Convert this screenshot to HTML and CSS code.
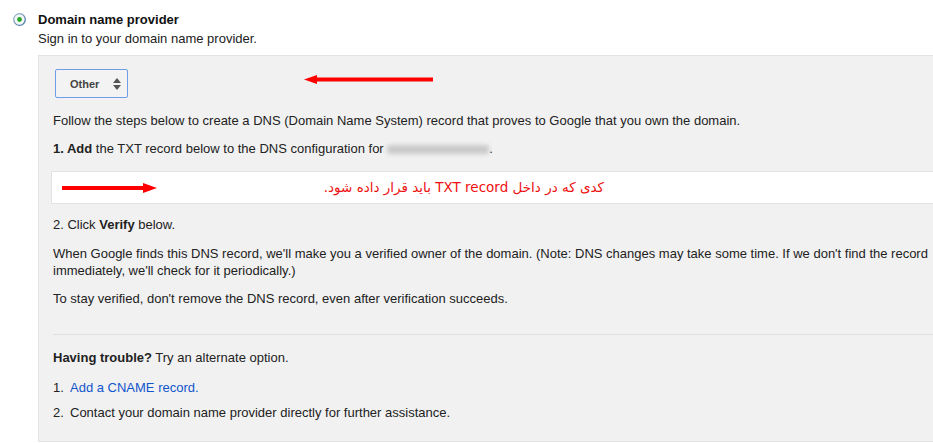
FILE: index.html
```html
<!DOCTYPE html>
<html>
<head>
<meta charset="utf-8">
<title>Domain name provider</title>
<link rel="stylesheet" href="styles.css">
</head>
<body>
<div class="option">
  <svg class="radio" width="13" height="13" viewBox="0 0 13 13">
    <defs>
      <linearGradient id="rg" x1="0" y1="0" x2="1" y2="1">
        <stop offset="0" stop-color="#a9c0d8"/>
        <stop offset="1" stop-color="#3b6fa3"/>
      </linearGradient>
    </defs>
    <circle cx="6.5" cy="6.5" r="5.8" fill="#f4f6f8" stroke="url(#rg)" stroke-width="1.3"/>
    <circle cx="6.5" cy="6.5" r="2.4" fill="#27a827"/>
  </svg>
  <div class="option-body">
    <div class="title">Domain name provider</div>
    <div class="sub">Sign in to your domain name provider.</div>
    <div class="panel">
      <div class="select-row">
        <div class="select">
          <span class="select-label">Other</span>
          <svg class="spinner" width="8" height="12" viewBox="0 0 8 12">
            <polygon points="4,0 8,5 0,5" fill="#555"/>
            <polygon points="0,7 8,7 4,12" fill="#555"/>
          </svg>
        </div>
        <svg class="arrow-left" width="129" height="9" viewBox="0 0 129 9">
          <rect x="12" y="2.5" width="117" height="4" fill="#ff0000"/>
          <polygon points="0,4.5 13,0 13,9" fill="#ff0000"/>
        </svg>
      </div>
      <p class="para first">Follow the steps below to create a DNS (Domain Name System) record that proves to Google that you own the domain.</p>
      <p class="para"><b>1. Add</b> the TXT record below to the DNS configuration for <span class="blur"></span>.</p>
      <div class="record">
        <svg class="arrow-right" width="95" height="10" viewBox="0 0 95 10">
          <rect x="0" y="3" width="83" height="4" fill="#ff0000"/>
          <polygon points="81,0 95,5 81,10" fill="#ff0000"/>
        </svg>
        <span class="fa" dir="rtl">کدی که در داخل TXT record باید قرار داده شود.</span>
      </div>
      <p class="para after-record">2. Click <b>Verify</b> below.</p>
      <p class="para wide">When Google finds this DNS record, we'll make you a verified owner of the domain. (Note: DNS changes may take some time. If we don't find the record immediately, we'll check for it periodically.)</p>
      <p class="para">To stay verified, don't remove the DNS record, even after verification succeeds.</p>
      <div class="divider"></div>
      <p class="para trouble"><b>Having trouble?</b> Try an alternate option.</p>
      <ol class="alt-list">
        <li class="alt-item"><span class="num">1.</span><a class="link" href="#">Add a CNAME record.</a></li>
        <li class="alt-item second"><span class="num">2.</span><span>Contact your domain name provider directly for further assistance.</span></li>
      </ol>
    </div>
  </div>
</div>
</body>
</html>
```
FILE: styles.css
```css
html, body {
  overflow: hidden;
}
body {
  margin: 0;
  background: #ffffff;
  font-family: "Liberation Sans", Arial, sans-serif;
  font-size: 13px;
  color: #222222;
}
.option {
  display: flex;
  align-items: flex-start;
  padding-top: 11px;
}
.radio {
  flex: none;
  margin: 2px 12px 0 13px;
}
.option-body {
  flex: none;
}
.title {
  font-weight: bold;
  line-height: 17px;
  color: #111;
}
.sub {
  line-height: 17px;
  margin-top: 2px;
}
.panel {
  margin-top: 8px;
  width: 960px;
  box-sizing: border-box;
  background: #f1f1f1;
  border-top: 1px solid #e3e3e3;
  border-left: 1px solid #e3e3e3;
  border-bottom: 1px solid #e3e3e3;
  padding: 13px 40px 20px 14px;
}
.select-row {
  display: flex;
  align-items: flex-start;
}
.select {
  margin-left: 2px;
  width: 73px;
  height: 29px;
  box-sizing: border-box;
  border: 1px solid #6f9ee8;
  border-radius: 2px;
  background: #f3f3f3;
  display: flex;
  align-items: center;
  justify-content: space-between;
  padding: 0 6px 0 14px;
}
.select-label {
  font-size: 11px;
  font-weight: bold;
  color: #444;
}
.spinner {
  display: block;
}
.arrow-left {
  display: block;
  margin-left: 176px;
  margin-top: 6px;
}
.para {
  margin: 11px 0 0 0;
  line-height: 17px;
}
.para.first {
  margin-top: 14px;
}
.blur {
  display: inline-block;
  width: 102px;
  height: 9px;
  vertical-align: -1px;
  background: #c9c9c9;
  border-radius: 3px;
  filter: blur(2px);
}
.record {
  margin: 14px 0 0 -2px;
  height: 33px;
  box-sizing: border-box;
  background: #ffffff;
  border: 1px solid #e3e3e3;
  border-right: none;
  display: flex;
  align-items: center;
  padding-left: 10px;
}
.arrow-right {
  display: block;
  flex: none;
}
.fa {
  display: block;
  width: 447px;
  text-align: right;
  font-family: "DejaVu Sans", Tahoma, sans-serif;
  font-size: 13.5px;
  color: #ee1111;
  line-height: 17px;
  margin-top: -1px;
}
.para.after-record {
  margin-top: 12px;
}
.para.wide {
  margin-top: 12px;
}
.divider {
  margin-top: 27px;
  height: 1px;
  background: #e0e0e0;
}
.para.trouble {
  margin-top: 14px;
}
.alt-list {
  list-style: none;
  margin: 13px 0 0 0;
  padding: 0;
}
.alt-item {
  display: flex;
  line-height: 17px;
}
.alt-item.second {
  margin-top: 8px;
}
.num {
  width: 17px;
  flex: none;
}
.link {
  color: #1155cc;
  text-decoration: none;
}
```
